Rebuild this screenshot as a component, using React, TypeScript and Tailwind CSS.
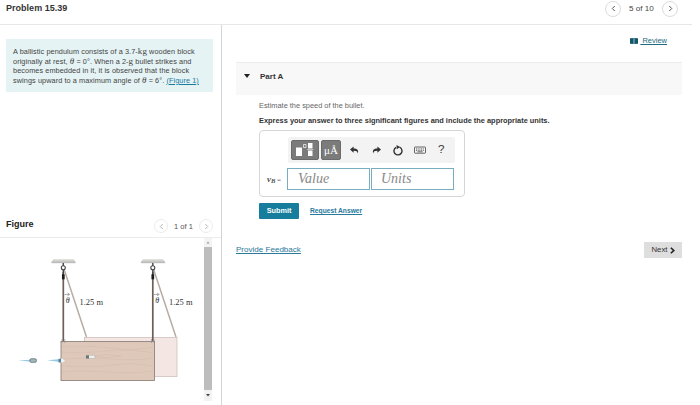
import type { ReactNode } from 'react';

const pendulums = [0, 89.5];

function Theta() {
  return <i className="font-['Liberation_Serif',serif] text-[9px] leading-none">θ</i>;
}

function Chevron({ flip = false }: { flip?: boolean }) {
  return (
    <svg viewBox="0 0 6 8" className="h-[7px] w-[5px]" fill="none" stroke="currentColor" strokeWidth="1.2">
      <path d={flip ? 'M1.5 1 4.5 4 1.5 7' : 'M4.5 1 1.5 4 4.5 7'} />
    </svg>
  );
}

function RoundButton({ children, muted = false }: { children: ReactNode; muted?: boolean }) {
  return (
    <button
      className={
        muted
          ? 'flex size-[14px] items-center justify-center rounded-full border border-[#ececec] text-[#b5b5b5]'
          : 'flex size-[16px] items-center justify-center rounded-full border border-[#dcdcdc] text-[#555]'
      }
    >
      {children}
    </button>
  );
}

function PendulumFigure() {
  return (
    <svg viewBox="0 0 204 167" className="block h-[167px] w-[204px]">
      <defs>
        <linearGradient id="ceiling" x1="0" y1="0" x2="0" y2="1">
          <stop offset="0" stopColor="#e6e6e3" />
          <stop offset="1" stopColor="#b9b9b6" />
        </linearGradient>
      </defs>

      {/* Block after the swing */}
      <rect x="84.500" y="99.500" width="92.500" height="39" fill="#f3e6e3" stroke="#cfc0bf" strokeWidth="0.800" />

      {/* Ropes and ceiling mounts */}
      {pendulums.map((x) => (
        <g key={x} transform={`translate(${x} 0)`}>
          <path d="M64.300 32 86.500 99" stroke="#b8aca4" strokeWidth="1.500" />
          <path d="M63.300 34V104" stroke="#6c5f59" strokeWidth="1.700" />
          <path d="M53.500 21h20l2.500 3.500H51z" fill="url(#ceiling)" />
          <path d="M51.500 24.700h24" stroke="#a9a9a7" strokeWidth="0.800" />
          <path d="M63.300 25v3M63.300 32v5" stroke="#444" strokeWidth="1.400" />
          <circle cx="63.300" cy="29.700" r="2" fill="#fff" stroke="#444" strokeWidth="1.100" />
          <path d="M63.300 36.300v5" stroke="#1c1c1c" strokeWidth="2.700" />
          <path d="M64.500 56.500h4.500M67.500 55l2.300 1.400-2.300 1.400" fill="none" stroke="#777" strokeWidth="0.600" />
          <text x="65.800" y="65" className="fill-[#333] font-['Liberation_Serif',serif] text-[8px] italic">
            θ
          </text>
          <text
            x="79.500"
            y="66.500"
            textLength="23.500"
            lengthAdjust="spacingAndGlyphs"
            className="fill-[#333] font-['Liberation_Serif',serif] text-[8px]"
          >
            1.25 m
          </text>
        </g>
      ))}

      {/* Block at rest */}
      <rect x="61" y="103.500" width="93.500" height="39" fill="#dec8ba" stroke="#90847c" strokeWidth="0.900" />
      <g fill="none" stroke="#d3bbac" strokeWidth="0.500">
        <path d="M62 109q26-2 48 1t43-1M62 114q20 2 43-1t48 2M62 121q25-2 49 0t42-1M62 128q33 2 52-1t39 1M62 134q18-2 44 0t47-1" />
        <path d="M92 118q15-3 29 0-14 3-29 0" />
      </g>
      <path d="M62 101v4M64.800 101v4M151.500 101v4M154 101v4" stroke="#888" strokeWidth="0.600" />

      {/* Bullet before, during and after impact */}
      <path d="M18 122.500 30 121.700v1.800zM47 122.300 59 121.300v2.400z" fill="#96cae2" />
      <rect x="30" y="120.800" width="6.300" height="3.500" rx="1" fill="#a9b8b8" stroke="#55717c" strokeWidth="0.800" />
      <path d="M58.500 120.800h2.500v3.700h-2.500z" fill="#55849a" />
      <path d="M61 120.800h1.500l2.500 1.900-2.500 1.800H61z" fill="#edf4f5" />
      <rect x="86" y="117.300" width="9" height="3.200" rx="1.200" fill="#f2eeeb" stroke="#aaa" strokeWidth="0.500" />
      <path d="M86 117.300h3v3.200h-3z" fill="#6f7775" />
    </svg>
  );
}

function AnswerToolbar() {
  return (
    <div className="ml-[28px] flex h-[26px] w-[167px] items-center rounded-[2px] bg-[#f3f3f3] pl-[3px] text-[#333]">
      <button className="flex h-[20px] w-[28px] items-center justify-center rounded-[2px] border border-[#6b6b6b] bg-[#7b7b7b]">
        <svg viewBox="0 0 20 16" className="h-[16px] w-[20px]" fill="#fff">
          <path d="M1 5.500h6V14H1zM13 1h4.500v5.500H13zM13 8.500h4.500V14H13z" />
          <path d="M8.500 2.500h2.500v3H8.500z" fill="none" stroke="#fff" strokeWidth="0.700" />
          <path d="M12 7.500h6.500" stroke="#ddd" strokeWidth="0.700" />
        </svg>
      </button>
      <button className="ml-[2px] h-[20px] w-[20px] rounded-[2px] border border-[#6b6b6b] bg-[#7b7b7b] font-['Liberation_Serif',serif] text-[11px] leading-[19px] text-white">
        μÅ
      </button>
      <svg viewBox="0 0 10 8" className="ml-[9px] h-[8px] w-[9px]" fill="currentColor">
        <path d="M0 3.500 4 0v2.200c4 0 6 1.800 4.500 5.800C8.500 5.500 7 4.800 4 4.800V7z" />
      </svg>
      <svg viewBox="0 0 10 8" className="ml-[13px] h-[8px] w-[9px]" fill="currentColor">
        <path d="M10 3.500 6 0v2.200C2 2.200 0 4 1.500 8 1.500 5.500 3 4.800 6 4.800V7z" />
      </svg>
      <svg viewBox="0 0 10 11" className="ml-[12px] h-[11px] w-[10px]" fill="none" stroke="currentColor" strokeWidth="1.400">
        <path d="M6.500 2.200A4 4 0 1 1 3.200 2.300" />
        <path d="M3.500 0 7 2 3.800 4.300z" fill="currentColor" stroke="none" />
      </svg>
      <svg viewBox="0 0 12 8" className="ml-[11px] h-[8px] w-[12px]" fill="none" stroke="#555" strokeWidth="0.900">
        <rect x="0.500" y="1" width="11" height="6.200" rx="0.600" />
        <path d="M2 2.900h8M2 4.400h8" strokeDasharray="1 0.700" />
        <path d="M3.500 5.800h5" />
      </svg>
      <span className="ml-[12px] text-[11.500px] leading-none">?</span>
    </div>
  );
}

export default function App() {
  return (
    <div className="flex h-[405px] w-[700px] flex-col overflow-hidden bg-white font-['Liberation_Sans',Arial,sans-serif] text-[#333]">
      <header className="mr-[8px] flex h-[25px] shrink-0 justify-between border-b border-[#e7e7e7]">
        <h1 className="pl-[6px] pt-[3px] text-[9px] font-bold leading-[11px] tracking-[0.020px]">Problem 15.39</h1>
        <div className="flex h-[17px] items-center pr-[14px] text-[8.100px] text-[#444]">
          <RoundButton>
            <Chevron />
          </RoundButton>
          <span className="w-[41px] pt-[2px] text-center">5 of 10</span>
          <RoundButton>
            <Chevron flip />
          </RoundButton>
        </div>
      </header>

      <div className="flex min-h-0 flex-1">
        <aside className="w-[222px] shrink-0 border-r border-[#cfd4dd]">
          <div className="ml-[6px] mt-[14px] h-[53px] w-[207px] whitespace-nowrap bg-[#e5f3f5] pl-[7px] pt-[8px] text-[7.300px] tracking-[0.080px] text-[#444]">
            <p className="h-[9.500px] leading-[9.500px]">
              A ballistic pendulum consists of a 3.7-<span className="font-['Liberation_Serif',serif] text-[9px] leading-none">kg</span> wooden block
            </p>
            <p className="h-[9.500px] leading-[9.500px]">
              originally at rest, <Theta /> = 0°. When a 2-<span className="font-['Liberation_Serif',serif] text-[9px] leading-none">g</span> bullet strikes and
            </p>
            <p className="h-[9.500px] leading-[9.500px]">becomes embedded in it, it is observed that the block</p>
            <p className="h-[9.500px] leading-[9.500px]">
              swings upward to a maximum angle of <Theta /> = 6°.{' '}
              <a className="text-[#197a9c] underline">(Figure 1)</a>
            </p>
          </div>

          <div className="mt-[126px] flex h-[20px] items-start justify-between border-b border-[#ececec] pl-[6px]">
            <h2 className="text-[9px] font-bold leading-[13px] text-[#222]">Figure</h2>
            <div className="mr-[8px] mt-[1px] flex items-center text-[7.500px] text-[#555]">
              <RoundButton muted>
                <Chevron />
              </RoundButton>
              <span className="w-[31px] pt-[1px] text-center">1 of 1</span>
              <RoundButton muted>
                <Chevron flip />
              </RoundButton>
            </div>
          </div>
          <div className="flex">
            <PendulumFigure />
            <div className="flex h-[163px] w-[8px] flex-col items-center bg-[#f3f3f3] text-[#555]">
              <svg viewBox="0 0 8 9" className="h-[9px] w-[8px]" fill="#999">
                <path d="M2.500 5.500h3L4 3.500z" />
              </svg>
              <div className="w-full flex-1 bg-[#bdbdbd]" />
              <svg viewBox="0 0 8 11" className="h-[11px] w-[8px]" fill="#444">
                <path d="M2 4h4L4 6.500z" />
              </svg>
            </div>
          </div>
        </aside>

        <main className="flex-1 pl-[14px]">
          <div className="flex h-[37px] justify-end pr-[33px] pt-[11px] text-[7.500px] leading-[10px] text-[#216b80]">
            <svg viewBox="0 0 8 6" className="mr-[2px] mt-[2px] h-[6px] w-[8px]" fill="#12586a">
              <path d="M0 .3 3.700 0v6L0 5.700zM4.300 0 8 .3v5.400L4.300 6z" />
            </svg>
            <a className="whitespace-pre underline"> Review</a>
          </div>

          <div className="mr-[18px] flex h-[33px] items-start border-t border-[#ededed] bg-[#f8f8f8] pl-[8px] pt-[8px]">
            <svg viewBox="0 0 6 4" className="mt-[3px] h-[4px] w-[6px]" fill="#222">
              <path d="M0 0h6L3 4z" />
            </svg>
            <h3 className="ml-[10px] text-[8px] font-bold leading-[11px]">Part A</h3>
          </div>

          <section className="pl-[23px] pt-[6px]">
            <p className="text-[7.400px] leading-[10px] text-[#666]">Estimate the speed of the bullet.</p>
            <p className="mt-[5px] text-[7.420px] font-bold leading-[10px]">
              Express your answer to three significant figures and include the appropriate units.
            </p>

            <div className="mt-[4px] h-[67px] w-[206px] rounded-[4px] border border-[#d6d6d6] pt-[6px]">
              <AnswerToolbar />
              <div className="mt-[5px] flex items-center font-['Liberation_Serif',serif] italic">
                <span className="w-[27px] pl-[7px] text-[9px] font-bold leading-none text-[#555]">
                  v<sub className="text-[6.500px]">B</sub>
                  <span className="text-[7px] font-normal not-italic"> =</span>
                </span>
                <div className="h-[22px] w-[83px] border border-[#78adc0] pl-[10px] text-[14px] leading-[20px] text-[#888]">Value</div>
                <div className="ml-[1px] h-[22px] w-[83px] border border-[#78adc0] pl-[9px] text-[14px] leading-[20px] text-[#888]">Units</div>
              </div>
            </div>

            <div className="mt-[6px] flex h-[16px] items-center">
              <button className="h-[16px] w-[40px] rounded-[1px] bg-[#167d9c] text-[7.300px] font-bold leading-[16px] text-white">Submit</button>
              <a className="ml-[11px] text-[6.700px] font-bold text-[#28799a] underline">Request Answer</a>
            </div>
          </section>

          <div className="mt-[23px] flex items-center justify-between pr-[18px]">
            <a className="text-[8.050px] text-[#28799a] underline">Provide Feedback</a>
            <button className="flex h-[16px] w-[38px] items-center justify-center gap-[2px] bg-[#dedede] text-[7.800px] text-[#333]">
              Next
              <svg viewBox="0 0 6 8" className="h-[7px] w-[5px]" fill="none" stroke="#222" strokeWidth="2">
                <path d="M1 .7 4.500 4 1 7.300" />
              </svg>
            </button>
          </div>
        </main>
      </div>
    </div>
  );
}
